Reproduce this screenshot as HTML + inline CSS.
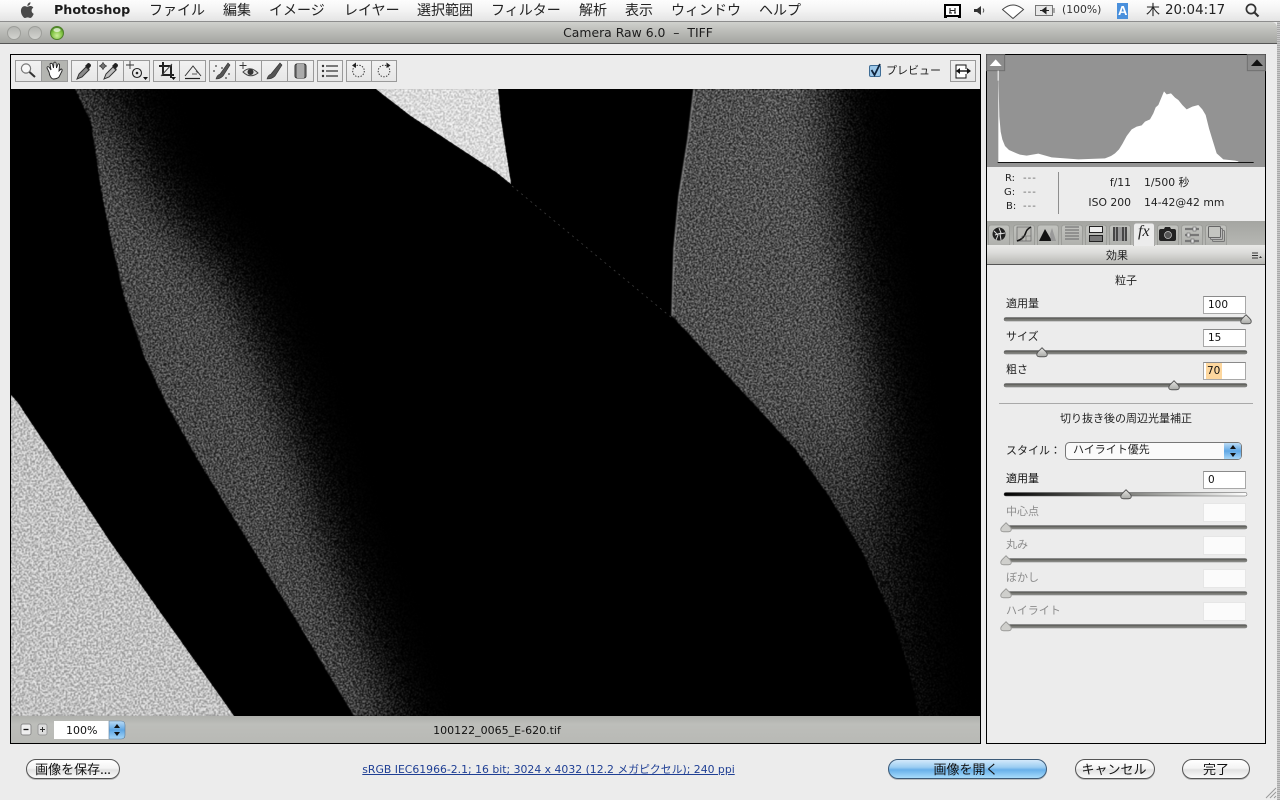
<!DOCTYPE html>
<html lang="ja">
<head>
<meta charset="utf-8">
<title>Camera Raw 6.0 - TIFF</title>
<style>
html,body{margin:0;padding:0;width:1280px;height:800px;overflow:hidden;background:#ececec;}
body{position:relative;font-family:"Liberation Sans","Noto Sans CJK JP",sans-serif;color:#111;}
.abs{position:absolute;}
.t{position:absolute;line-height:1;white-space:nowrap;font-family:"Noto Sans CJK JP","Liberation Sans",sans-serif;}
.d{font-family:"DejaVu Sans","Noto Sans CJK JP",sans-serif;}
.m{font-size:14px;top:3px;color:#222;}
.l{font-size:11px;color:#222;}
.g{color:#8c8c8c;}
.c{transform:translateX(-50%);}
.r{transform:translateX(-100%);}
.inp{position:absolute;left:1203px;width:43px;height:18px;box-sizing:border-box;background:#fff;border:1px solid #a8a8a8;border-top-color:#8a8a8a;}
.inp.off{background:#fbfbfb;border-color:#e6e6e6;height:19px;}
.val{font-size:10.5px;color:#111;}
.btn{position:absolute;top:759px;height:20px;box-sizing:border-box;border:1px solid #555;border-radius:10px;background:linear-gradient(#fff 0%,#f4f4f4 45%,#e2e2e2 55%,#fbfbfb 100%);box-shadow:0 1px 0 #bbb;}
.btn.b{background:linear-gradient(#d3e9fb 0%,#9ccdf2 40%,#68b0ea 55%,#a8dcfb 100%);border-color:#3c5a78;}
</style>
</head>
<body>
<!-- right stripes -->
<div class="abs" style="left:1277px;top:22px;width:3px;height:778px;background:repeating-linear-gradient(#c9c9c9 0 1px,#a8a8a8 1px 2px);"></div>
<!-- menu bar -->
<div class="abs" style="left:0;top:0;width:1280px;height:22px;background:linear-gradient(#fdfdfd,#f3f3f3 50%,#e4e4e4);border-bottom:1px solid #8d8d8d;box-sizing:border-box;"></div>
<!-- title bar -->
<div class="abs" style="left:0;top:22px;width:1277px;height:22px;box-sizing:border-box;border-top-right-radius:5px;background:linear-gradient(#d0d1cd,#bdbeba 40%,#a4a5a1);border-bottom:1px solid #555;"></div>
<!-- frame -->
<div class="abs" style="left:10px;top:54px;width:971px;height:690px;box-sizing:border-box;border:1px solid #000;background:#ececec;"></div>
<div class="abs" style="left:11px;top:716px;width:969px;height:27px;background:linear-gradient(#aeafab,#bdbeba 30%,#b8b9b5);"></div>
<!-- right panel -->
<div class="abs" style="left:986px;top:54px;width:280px;height:690px;box-sizing:border-box;border:1px solid #000;background:#ececec;"></div>
<div class="abs" style="left:987px;top:55px;width:278px;height:112px;background:#939393;"></div>
<div class="abs" style="left:987px;top:221px;width:278px;height:24px;background:linear-gradient(#a4a5a1,#b6b7b3);"></div>
<div class="abs" style="left:987px;top:245px;width:278px;height:20px;box-sizing:border-box;background:linear-gradient(#e9e9e7,#dcdcda 40%,#b8b8b4);border-bottom:1px solid #555;"></div>

<svg class="abs" style="left:0;top:0" width="1280" height="800" viewBox="0 0 1280 800" xmlns="http://www.w3.org/2000/svg">
<defs>
<filter id="grain" filterUnits="userSpaceOnUse" x="11" y="89" width="969" height="627" color-interpolation-filters="sRGB">
<feTurbulence type="fractalNoise" baseFrequency=".85" numOctaves="2" seed="4" result="n"/>
<feColorMatrix in="n" type="matrix" values="0 0 0 0 1 0 0 0 0 1 0 0 0 0 1 3.8 0 0 0 -1.45" result="m"/>
<feColorMatrix in="SourceAlpha" type="matrix" values="0 0 0 0 1 0 0 0 0 1 0 0 0 0 1 0 0 0 1 0" result="s"/>
<feComposite in="s" in2="m" operator="arithmetic" k1="0" k2="1" k3="1" k4="-1" result="a"/>
<feColorMatrix in="a" type="matrix" values="0 0 0 0 .74 0 0 0 0 .74 0 0 0 0 .74 0 0 0 1 0" result="c"/>
<feGaussianBlur in="c" stdDeviation=".4"/>
</filter>
<filter id="grainHi" filterUnits="userSpaceOnUse" x="11" y="89" width="969" height="627" color-interpolation-filters="sRGB">
<feTurbulence type="fractalNoise" baseFrequency=".62" numOctaves="3" seed="9" result="n"/>
<feColorMatrix in="n" type="matrix" values="0 0 0 0 1 0 0 0 0 1 0 0 0 0 1 4.2 0 0 0 -1.55" result="m"/>
<feComposite in="SourceGraphic" in2="m" operator="in" result="c"/>
<feGaussianBlur in="c" stdDeviation=".4"/>
</filter>
<filter id="b22" filterUnits="userSpaceOnUse" x="-100" y="-100" width="1400" height="1000"><feGaussianBlur stdDeviation="26"/></filter>
<filter id="b16" filterUnits="userSpaceOnUse" x="-100" y="-100" width="1400" height="1000"><feGaussianBlur stdDeviation="26"/></filter>
<filter id="soft" x="-5%" y="-5%" width="110%" height="110%"><feGaussianBlur stdDeviation=".5"/></filter>
<clipPath id="photo"><rect x="11" y="89" width="969" height="627"/></clipPath>
<clipPath id="aEdge"><polygon points="75,89 91,122 101,189 111,239 124,296 144,356 166,403 198,460 251,546 304,633 354,716 700,716 700,89"/></clipPath>
<clipPath id="bEdge"><polygon points="694,89 688,139 679,196 674,249 672,316 753,403 796,450 829,496 863,553 893,620 909,670 919,716 981,716 981,89"/></clipPath>
<linearGradient id="bFade" gradientUnits="userSpaceOnUse" x1="0" y1="89" x2="0" y2="716">
<stop offset="0" stop-color="#fff" stop-opacity=".96"/><stop offset=".5" stop-color="#fff" stop-opacity=".94"/><stop offset=".65" stop-color="#fff" stop-opacity=".76"/><stop offset=".75" stop-color="#fff" stop-opacity=".62"/><stop offset=".85" stop-color="#fff" stop-opacity=".5"/><stop offset="1" stop-color="#fff" stop-opacity=".4"/>
</linearGradient>
<linearGradient id="aFade" gradientUnits="userSpaceOnUse" x1="0" y1="89" x2="0" y2="716">
<stop offset="0" stop-color="#fff" stop-opacity=".78"/><stop offset=".12" stop-color="#fff" stop-opacity=".92"/><stop offset="1" stop-color="#fff" stop-opacity=".88"/>
</linearGradient>
<linearGradient id="trk" x1="0" y1="0" x2="0" y2="1"><stop offset="0" stop-color="#4c4d49"/><stop offset="1" stop-color="#989994"/></linearGradient>
<linearGradient id="trkV" x1="0" y1="0" x2="1" y2="0"><stop offset="0" stop-color="#000"/><stop offset=".5" stop-color="#7c7d79"/><stop offset="1" stop-color="#fff"/></linearGradient>
<linearGradient id="thumb" x1="0" y1="0" x2="0" y2="1"><stop offset="0" stop-color="#e6e6e4"/><stop offset="1" stop-color="#a9aaa6"/></linearGradient>
<linearGradient id="tb" x1="0" y1="0" x2="0" y2="1"><stop offset="0" stop-color="#f2f2f2"/><stop offset="1" stop-color="#e6e6e6"/></linearGradient>
<linearGradient id="tab" x1="0" y1="0" x2="0" y2="1"><stop offset="0" stop-color="#c2c3bf"/><stop offset="1" stop-color="#b0b1ad"/></linearGradient>
<linearGradient id="step" x1="0" y1="0" x2="0" y2="1"><stop offset="0" stop-color="#bcdcf6"/><stop offset=".5" stop-color="#5ea6e4"/><stop offset="1" stop-color="#a6d6f8"/></linearGradient>
<radialGradient id="grn" cx=".5" cy=".7" r=".7"><stop offset="0" stop-color="#cdf09a"/><stop offset=".6" stop-color="#7fc142"/><stop offset="1" stop-color="#3f7d1d"/></radialGradient>
<linearGradient id="gry" x1="0" y1="0" x2="0" y2="1"><stop offset="0" stop-color="#b2b3af"/><stop offset="1" stop-color="#d4d5d1"/></linearGradient>
<symbol id="th" viewBox="0 0 16 14" width="12" height="10.500" overflow="visible"><path d="M8 1 L13 6 Q15 8 15 10 Q15 13 11 13 H5 Q1 13 1 10 Q1 8 3 6 Z" fill="url(#thumb)" stroke="#555" stroke-width="1.200"/></symbol>
<symbol id="thOff" viewBox="0 0 16 14" width="12" height="10.500" overflow="visible"><path d="M8 1 L13 6 Q15 8 15 10 Q15 13 11 13 H5 Q1 13 1 10 Q1 8 3 6 Z" fill="#cfcfcc" stroke="#9a9a98" stroke-width="1.200"/></symbol>
</defs>

<!-- photo -->
<g clip-path="url(#photo)">
<rect x="11" y="89" width="969" height="627" fill="#000"/>
<!-- bottom left light rock -->
<polygon points="11,395 18,403 111,543 234,716 11,716" fill="#868686"/>
<g filter="url(#grainHi)"><polygon points="11,395 18,403 111,543 234,716 11,716" fill="#f4f4f4"/></g>
<!-- top wedge -->
<polygon points="376,89 498,89 501,120 511,184 496,172 411,116" fill="#b0b0b0"/>
<g filter="url(#grainHi)"><polygon points="376,89 498,89 501,120 511,184 496,172 411,116" fill="#ffffff"/></g>
<line x1="512" y1="186" x2="672" y2="318" stroke="#444" stroke-width=".9" stroke-dasharray="2 4" opacity=".8"/>
<!-- left band -->
<g filter="url(#grain)">
<g clip-path="url(#aEdge)">
<polygon filter="url(#b22)" fill="url(#aFade)" points="0,20 108,60 160,189 238,280 292,403 340,546 420,760 250,760 60,500 0,200"/>
</g>
</g>
<!-- right band -->
<g filter="url(#grain)">
<g clip-path="url(#bEdge)">
<polygon filter="url(#b16)" fill="url(#bFade)" points="620,30 835,30 850,200 868,300 890,420 905,560 935,770 780,770 620,320"/>
</g>
</g>
<polyline points="694,89 688,139 679,196 674,249 672,316" fill="none" stroke="#cfcfcf" stroke-width="1.600" opacity=".5" filter="url(#soft)"/>
</g>

<!-- traffic lights -->
<circle cx="14" cy="33" r="6.500" fill="url(#gry)" stroke="#9d9e9a"/>
<circle cx="35" cy="33" r="6.500" fill="url(#gry)" stroke="#9d9e9a"/>
<circle cx="57" cy="33" r="6.500" fill="url(#grn)" stroke="#4f7f2b"/>
<ellipse cx="57" cy="30" rx="3.600" ry="2" fill="#fff" opacity=".65"/>

<!-- apple -->
<g transform="translate(18,1) scale(.8)"><path fill="#4a4a4a" d="M17.05 12.04c-.03-2.5 2.04-3.7 2.13-3.76-1.16-1.7-2.97-1.93-3.61-1.96-1.54-.16-3 .9-3.78.9-.78 0-1.98-.88-3.25-.86-1.67.03-3.21.97-4.07 2.47-1.74 3.01-.44 7.47 1.25 9.91.83 1.2 1.81 2.54 3.1 2.49 1.25-.05 1.72-.8 3.22-.8 1.5 0 1.93.8 3.24.78 1.34-.03 2.19-1.22 3-2.42.95-1.39 1.34-2.73 1.36-2.8-.03-.01-2.6-1-2.63-3.95zM14.6 4.7c.68-.83 1.15-1.98 1.02-3.13-.99.04-2.18.66-2.89 1.49-.63.73-1.19 1.91-1.04 3.03 1.1.09 2.23-.56 2.91-1.39z"/></g>

<!-- status icons -->
<rect x="945" y="5" width="15" height="11" fill="#fff" stroke="#000" stroke-width="2"/>
<path d="M944 17h3M958 17h3" stroke="#000" stroke-width="2"/>
<path d="M950 8v5M955 8v5M950 10.500h5M949 13h3M954 13h2" stroke="#222" stroke-width="1.100" fill="none"/>
<path d="M974 9h3l4-3v9l-4-3h-3z" fill="#333"/><path d="M983 8.500q1.500 2 0 4" stroke="#555" fill="none"/>
<path d="M1002.500 9.500 Q1013 .5 1023.500 9.500 L1013 18.500 Z" fill="#fff" stroke="#444" stroke-width="1"/>
<rect x="1035.500" y="5.500" width="17" height="10" fill="#e8e8e8" stroke="#777"/>
<rect x="1053" y="8" width="2" height="5" fill="#aaa"/>
<path d="M1040 10.500h9M1046 7.500v6l-4-3z" fill="#222" stroke="#222"/>
<rect x="1117" y="3" width="11" height="16" fill="#4a90dc"/>
<circle cx="1251" cy="9" r="4.600" fill="none" stroke="#333" stroke-width="1.700"/>
<line x1="1254.500" y1="12.500" x2="1258.500" y2="16.500" stroke="#333" stroke-width="2.200"/>

<!-- toolbar buttons -->
<g stroke="#9a9a9a" stroke-width="1" fill="url(#tb)">
<rect x="15.500" y="60.500" width="26" height="21"/><rect x="41.500" y="60.500" width="26" height="21" fill="#b4b5b1"/>
<rect x="71.500" y="60.500" width="26" height="21"/><rect x="97.500" y="60.500" width="26" height="21"/><rect x="123.500" y="60.500" width="26" height="21"/>
<rect x="153.500" y="60.500" width="26" height="21"/><rect x="179.500" y="60.500" width="26" height="21"/>
<rect x="209.500" y="60.500" width="26" height="21"/><rect x="235.500" y="60.500" width="26" height="21"/><rect x="261.500" y="60.500" width="26" height="21"/><rect x="287.500" y="60.500" width="26" height="21"/>
<rect x="317.500" y="60.500" width="25" height="21"/>
<rect x="346.500" y="60.500" width="25" height="21"/><rect x="371.500" y="60.500" width="25" height="21"/>
<rect x="950.500" y="60.500" width="25" height="21"/>
</g>
<!-- zoom -->
<circle cx="26" cy="68.500" r="4.600" fill="#f8f8f8" stroke="#777" stroke-width="1.200"/>
<line x1="29.500" y1="72" x2="35" y2="77" stroke="#333" stroke-width="2"/>
<!-- hand -->
<path d="M49 72 L47 68 Q47 66 49 67 L51 70 L50 64 Q51 62.500 52.500 64 L53.500 68 L54 62.500 Q55.500 61.500 56 63 L56.500 68 L58 64 Q59.500 63.500 59.500 65 L59 71 L61 69 Q62.500 69 62 71 L59 77 Q57 79 53 79 Q50 78 49 72Z" fill="#fff" stroke="#222" stroke-width=".9"/>
<!-- eyedropper -->
<path d="M77 79 L79 74 L86 67 L89 70 L82 77 Z" fill="#8a8a8a" stroke="#333"/><path d="M86 65 L88 63 Q90 63 91 65 Q91 67 89 68 L90 70 L85 66Z" fill="#222"/>
<!-- sampler -->
<path d="M104 79 L106 74 L113 67 L116 70 L109 77 Z" fill="#bdbdbd" stroke="#333"/><path d="M113 65 L115 63 Q117 63 118 65 Q118 67 116 68 L117 70 L112 66Z" fill="#222"/>
<path d="M103 62v8M99 66h8" stroke="#444" stroke-width=".9"/><rect x="101" y="64" width="4" height="4" fill="none" stroke="#444" transform="rotate(45 103 66)"/>
<!-- target -->
<path d="M130 61v8M126 65h8" stroke="#333" stroke-width=".9"/>
<circle cx="137" cy="73" r="4.500" fill="none" stroke="#222" stroke-width="1.100"/><circle cx="137" cy="73" r="1.300" fill="#222"/>
<path d="M143 77h5l-2.500 3z" fill="#111"/>
<!-- crop -->
<path d="M163 62v13h11M159 66h12v12" fill="none" stroke="#222" stroke-width="2"/><line x1="161" y1="76" x2="172" y2="64" stroke="#444"/>
<path d="M171 77h5l-2.500 3z" fill="#111"/>
<!-- straighten -->
<path d="M185 76 L193 66 L201 76" fill="none" stroke="#333"/><path d="M185 78.500h15" stroke="#222" stroke-width="1.200"/><path d="M192 74h5M196 71l2 2" stroke="#555" stroke-width="1"/>
<!-- retouch -->
<path d="M216 79 Q217 75 220 74 L228 63 L230 65 L223 76 Q220 79 216 79Z" fill="#555" stroke="#333" stroke-width=".6"/>
<g fill="#666"><circle cx="216" cy="66" r="1"/><circle cx="214" cy="71" r="1"/><circle cx="222" cy="68" r="1"/><circle cx="229" cy="74" r="1"/><circle cx="226" cy="78" r="1"/></g>
<!-- red eye -->
<path d="M243 62v7M239.500 65.500h7" stroke="#333" stroke-width=".9"/>
<path d="M243 72 Q250 65 258 73 Q250 79 243 72Z" fill="#ddd" stroke="#444"/><circle cx="250.500" cy="72" r="3" fill="#333"/>
<!-- adj brush -->
<path d="M267 79 Q268 75 271 74 L280 63 L282 65 L275 76 Q272 79 267 79Z" fill="#555" stroke="#333" stroke-width=".6"/>
<!-- grad -->
<rect x="295" y="64" width="11" height="14" rx="2" fill="#777" stroke="#333"/><rect x="297" y="64" width="7" height="14" fill="#aaa"/>
<!-- list -->
<path d="M326 66h12M326 71h12M326 76h12" stroke="#333" stroke-width="1.200"/>
<g fill="#333"><circle cx="323" cy="66" r="1.200"/><circle cx="323" cy="71" r="1.200"/><circle cx="323" cy="76" r="1.200"/></g>
<!-- rotate -->
<circle cx="358.500" cy="71" r="5.800" fill="none" stroke="#333" stroke-dasharray="1.400 1.400"/><path d="M356 62.500v5.500l-4-2.500z" fill="#222"/>
<circle cx="384" cy="71" r="5.800" fill="none" stroke="#333" stroke-dasharray="1.400 1.400"/><path d="M386.500 62.500v5.500l4-2.500z" fill="#222"/>
<!-- preview checkbox -->
<rect x="869.500" y="65.500" width="11" height="11" rx="1.500" fill="#9cc8ea" stroke="#3f6d96"/>
<path d="M871.500 70 L874.500 75 L880 64" fill="none" stroke="#10243c" stroke-width="1.800"/>
<!-- switch -->
<path d="M966 69v-4h-10v13h10v-4" fill="#fff" stroke="#111"/><path d="M958 71h12" stroke="#111" stroke-width="1.400"/><path d="M960 68v6l-4-3zM967 68v6l4-3z" fill="#111"/>

<!-- histogram -->
<g transform="translate(985,50) scale(.33333)">
<polygon fill="#fff" points="40,65 43,200 47,245 52,268 60,288 72,300 90,308 105,314 125,317 160,311 200,322 280,328 360,325 378,318 390,310 402,298 412,282 425,258 440,238 455,230 470,226 480,215 495,208 505,190 512,172 520,165 527,148 537,124 545,133 558,130 570,143 580,150 592,165 605,178 622,170 640,165 652,178 662,195 672,235 682,268 695,310 715,328 750,332 760,334 760,337 40,337"/>
<rect x="38" y="336" width="768" height="3" fill="#111"/>
<rect x="5" y="14" width="54" height="48" fill="#8c8c8c" stroke="#6f6f6f" stroke-width="3"/>
<path d="M14 48 L32 28 L50 48Z" fill="#fff"/>
<rect x="787" y="14" width="54" height="48" fill="#8c8c8c" stroke="#6f6f6f" stroke-width="3"/>
<path d="M798 48 L816 28 L834 48Z" fill="#111"/>
<rect x="38" y="62" width="3" height="30" fill="#fff"/>
</g>
<line x1="1058.500" y1="172" x2="1058.500" y2="214" stroke="#8e8e8e"/>

<!-- tabs -->
<g stroke="#9c9d99" fill="url(#tab)">
<path d="M988.500 245v-17q0-3 3-3h15q3 0 3 3v17"/>
<path d="M1013.500 245v-17q0-3 3-3h15q3 0 3 3v17"/>
<path d="M1037.500 245v-17q0-3 3-3h15q3 0 3 3v17"/>
<path d="M1061.500 245v-17q0-3 3-3h15q3 0 3 3v17"/>
<path d="M1085.500 245v-17q0-3 3-3h15q3 0 3 3v17"/>
<path d="M1109.500 245v-17q0-3 3-3h15q3 0 3 3v17"/>
<path d="M1133.500 246v-20q0-3 3-3h15q3 0 3 3v20" fill="#ececec" stroke="#a8a8a6"/>
<path d="M1157.500 245v-17q0-3 3-3h15q3 0 3 3v17"/>
<path d="M1181.500 245v-17q0-3 3-3h15q3 0 3 3v17"/>
<path d="M1205.500 245v-17q0-3 3-3h15q3 0 3 3v17"/>
</g>
<!-- tab icons -->
<circle cx="999" cy="234" r="6.500" fill="#222"/><path d="M999 228l2 5-6 2M1005 233l-5 1 1 6M996 240l2-5-4-4" stroke="#ddd" fill="none"/>
<rect x="1017" y="227" width="14" height="14" fill="#b8b8b4" stroke="#666" stroke-width=".7"/><path d="M1017 241Q1024 239 1026 232 1027 229 1031 227" fill="none" stroke="#111" stroke-width="1.500"/><path d="M1022 236v5M1026 236v5M1022 236h9" stroke="#666" stroke-width=".6"/>
<path d="M1039 241 L1045 229 L1052 241Z" fill="#111"/><path d="M1050 234l2-6 4 13h-5z" fill="#999"/>
<path d="M1065 227h14M1065 230h14M1065 233h14M1065 236h14M1065 239h14" stroke="#777" stroke-width="1.200"/>
<rect x="1089.500" y="226.500" width="13" height="6" fill="#eee" stroke="#222"/><rect x="1089.500" y="235.500" width="13" height="6" fill="#777" stroke="#222"/>
<path d="M1113 227h14v14h-14z" fill="#999"/><path d="M1114 227v14M1117 227v14M1123 227v14M1126 227v14" stroke="#333" stroke-width="1.600"/>
<path d="M1161 229h3l1-2h5l1 2h3q2 0 2 2v8q0 2-2 2h-13q-2 0-2-2v-8q0-2 2-2z" fill="#222"/><circle cx="1168" cy="235" r="3.500" fill="#555" stroke="#ccc" stroke-width=".7"/>
<path d="M1185 229h14M1185 235h14M1185 241h14" stroke="#777" stroke-width="2.200"/><rect x="1193" y="227" width="3" height="4" fill="#ddd" stroke="#666" stroke-width=".6"/><rect x="1187" y="233" width="3" height="4" fill="#ddd" stroke="#666" stroke-width=".6"/><rect x="1191" y="239" width="3" height="4" fill="#ddd" stroke="#666" stroke-width=".6"/>
<rect x="1212.500" y="230.500" width="12" height="11" rx="1" fill="none" stroke="#777"/><rect x="1210.500" y="228.500" width="12" height="11" rx="1" fill="#bbb" stroke="#777"/><rect x="1208.500" y="226.500" width="12" height="11" rx="1" fill="#c4c5c1" stroke="#666"/>
<!-- panel menu -->
<path d="M1252 253h6M1252 255.500h6M1252 258h6" stroke="#333" stroke-width="1"/><path d="M1259 258h3l-1.500-2z" fill="#333"/>

<!-- sliders -->
<g>
<rect x="1004" y="317.500" width="243" height="3.500" rx="1.700" fill="url(#trk)" stroke="#666" stroke-width=".5"/>
<rect x="1004" y="350.500" width="243" height="3.500" rx="1.700" fill="url(#trk)" stroke="#666" stroke-width=".5"/>
<rect x="1004" y="383.500" width="243" height="3.500" rx="1.700" fill="url(#trk)" stroke="#666" stroke-width=".5"/>
<rect x="1004" y="492.500" width="243" height="3.500" rx="1.700" fill="url(#trkV)" stroke="#555" stroke-width=".5"/>
<rect x="1004" y="525.500" width="243" height="3.500" rx="1.700" fill="url(#trk)" stroke="#777" stroke-width=".5"/>
<rect x="1004" y="558.500" width="243" height="3.500" rx="1.700" fill="url(#trk)" stroke="#777" stroke-width=".5"/>
<rect x="1004" y="591.500" width="243" height="3.500" rx="1.700" fill="url(#trk)" stroke="#777" stroke-width=".5"/>
<rect x="1004" y="624.500" width="243" height="3.500" rx="1.700" fill="url(#trk)" stroke="#777" stroke-width=".5"/>
<use href="#th" x="1240" y="314"/>
<use href="#th" x="1036" y="347"/>
<use href="#th" x="1168" y="380"/>
<use href="#th" x="1120" y="489"/>
<use href="#thOff" x="1000" y="522"/>
<use href="#thOff" x="1000" y="555"/>
<use href="#thOff" x="1000" y="588"/>
<use href="#thOff" x="1000" y="621"/>
</g>
<line x1="999" y1="403.500" x2="1253" y2="403.500" stroke="#a9a9a9"/>
<!-- select -->
<rect x="1065.500" y="442.500" width="176" height="17" rx="4" fill="#fafafa" stroke="#777"/>
<path d="M1224 443h14q3 0 3 3v10q0 3-3 3h-14z" fill="url(#step)"/>
<path d="M1230 449l3-4 3 4zM1230 453l3 4 3-4z" fill="#111"/>

<!-- zoom stepper -->
<rect x="21" y="724" width="10" height="11" rx="2" fill="#eee" stroke="#8a8a8a"/><path d="M23.500 729.500h5" stroke="#111" stroke-width="1.300"/>
<rect x="38" y="724" width="9" height="11" rx="2" fill="#ddd" stroke="#999"/><path d="M40 729.500h5M42.500 727v5" stroke="#333"/>
<rect x="54" y="721" width="56" height="18" fill="#fff"/>
<path d="M109 721h12q4 0 4 4v10q0 4-4 4h-12z" fill="url(#step)" stroke="#5a7b9a" stroke-width=".6"/>
<path d="M114 728l3-4 3 4zM114 732l3 4 3-4z" fill="#111"/>
<!-- resize grip -->
<path d="M1266 798l10-10M1270 798l6-6M1274 798l2-2" stroke="#9a9a9a"/>
</svg>

<!-- menu text -->
<div class="t m" style="left:54px;font-family:'DejaVu Sans',sans-serif;font-weight:700;font-size:12.700px;top:4px;color:#1c1c1c;">Photoshop</div>
<div class="t m" style="left:149px;">ファイル</div>
<div class="t m" style="left:223px;">編集</div>
<div class="t m" style="left:269px;">イメージ</div>
<div class="t m" style="left:344px;">レイヤー</div>
<div class="t m" style="left:417px;">選択範囲</div>
<div class="t m" style="left:491px;">フィルター</div>
<div class="t m" style="left:579px;">解析</div>
<div class="t m" style="left:625px;">表示</div>
<div class="t m" style="left:671px;">ウィンドウ</div>
<div class="t m" style="left:759px;">ヘルプ</div>
<div class="t d" style="left:1062px;top:5px;font-size:10.800px;color:#333;">(100%)</div>
<div class="t" style="left:1118px;top:4px;font-size:13px;color:#fff;font-weight:700;font-family:'Liberation Sans',sans-serif;">A</div>
<div class="t" style="left:1146px;top:3px;font-size:14px;color:#222;">木</div>
<div class="t d" style="left:1165px;top:4px;font-size:13.400px;color:#222;">20:04:17</div>

<div class="t d" style="left:638px;top:26.500px;font-size:12.400px;color:#1c1c1c;transform:translateX(-50%);white-space:pre;">Camera Raw 6.0  –  TIFF</div>

<!-- toolbar text -->
<div class="t" style="left:886px;top:65px;font-size:11px;color:#222;">プレビュー</div>

<!-- info -->
<div class="t d" style="left:1005px;top:174px;font-size:10px;color:#222;">R:</div>
<div class="t d" style="left:1004px;top:188px;font-size:10px;color:#222;">G:</div>
<div class="t d" style="left:1006px;top:202px;font-size:10px;color:#222;">B:</div>
<div class="t d" style="left:1023px;top:174px;font-size:10px;letter-spacing:1px;color:#666;">---</div>
<div class="t d" style="left:1023px;top:188px;font-size:10px;letter-spacing:1px;color:#666;">---</div>
<div class="t d" style="left:1023px;top:202px;font-size:10px;letter-spacing:1px;color:#666;">---</div>
<div class="t d r" style="left:1131px;top:178px;font-size:10.800px;color:#222;">f/11</div>
<div class="t d" style="left:1144px;top:178px;font-size:10.800px;color:#222;">1/500 秒</div>
<div class="t d r" style="left:1131px;top:198px;font-size:10.800px;color:#222;">ISO 200</div>
<div class="t d" style="left:1144px;top:198px;font-size:10.800px;color:#222;">14-42@42 mm</div>
<div class="t" style="left:1138px;top:224px;font-size:16px;font-style:italic;font-family:'Liberation Serif',serif;color:#222;">fx</div>

<div class="t l c" style="left:1117px;top:250px;">効果</div>
<div class="t l c" style="left:1126px;top:275px;">粒子</div>

<div class="t l" style="left:1006px;top:298px;">適用量</div>
<div class="inp" style="top:296px;"></div>
<div class="t d val" style="left:1208px;top:300px;">100</div>
<div class="t l" style="left:1006px;top:331px;">サイズ</div>
<div class="inp" style="top:329px;"></div>
<div class="t d val" style="left:1208px;top:333px;">15</div>
<div class="t l" style="left:1006px;top:364px;">粗さ</div>
<div class="inp" style="top:362px;"></div>
<div class="abs" style="left:1206px;top:363px;width:16px;height:16px;background:#fdd79e;"></div>
<div class="t d val" style="left:1207px;top:366px;">70</div>

<div class="t l c" style="left:1126px;top:413px;">切り抜き後の周辺光量補正</div>
<div class="t l" style="left:1006px;top:445px;">スタイル：</div>
<div class="t l" style="left:1073px;top:444px;">ハイライト優先</div>

<div class="t l" style="left:1006px;top:473px;color:#111;">適用量</div>
<div class="inp" style="top:471px;"></div>
<div class="t d val" style="left:1208px;top:475px;">0</div>
<div class="t l g" style="left:1006px;top:506px;">中心点</div>
<div class="inp off" style="top:503px;"></div>
<div class="t l g" style="left:1006px;top:539px;">丸み</div>
<div class="inp off" style="top:536px;"></div>
<div class="t l g" style="left:1006px;top:572px;">ぼかし</div>
<div class="inp off" style="top:569px;"></div>
<div class="t l g" style="left:1006px;top:605px;">ハイライト</div>
<div class="inp off" style="top:602px;"></div>

<!-- bottom bar -->
<div class="t d" style="left:66px;top:725px;font-size:11px;color:#111;">100%</div>
<div class="t d c" style="left:497px;top:724.500px;font-size:11px;color:#111;">100122_0065_E-620.tif</div>

<!-- buttons -->
<div class="btn" style="left:26px;width:94px;"></div>
<div class="t c" style="left:73px;top:762px;font-size:13px;color:#111;">画像を保存...</div>
<div class="t d c" style="left:548.500px;top:765px;font-size:10.850px;color:#1f3f94;text-decoration:underline;">sRGB IEC61966-2.1; 16 bit; 3024 x 4032 (12.2 メガピクセル); 240 ppi</div>
<div class="btn b" style="left:888px;width:159px;"></div>
<div class="t c" style="left:966px;top:762px;font-size:13px;color:#111;">画像を開く</div>
<div class="btn" style="left:1075px;width:80px;"></div>
<div class="t c" style="left:1114px;top:762px;font-size:13px;color:#111;">キャンセル</div>
<div class="btn" style="left:1182px;width:68px;"></div>
<div class="t c" style="left:1216px;top:762px;font-size:13px;color:#111;">完了</div>
</body>
</html>
